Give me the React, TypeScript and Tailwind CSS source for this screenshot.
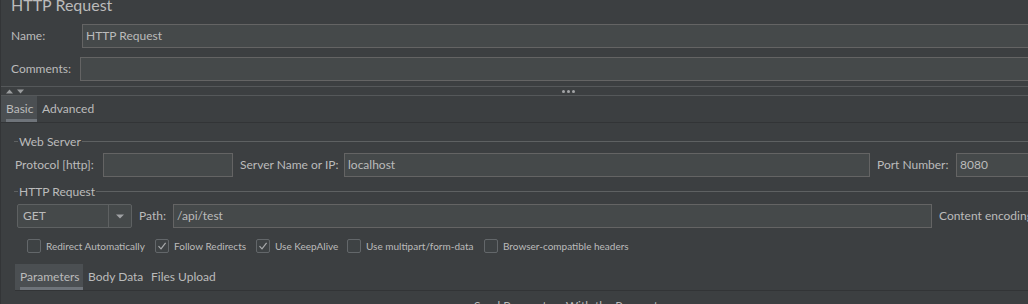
import React from "react";

const Field = ({
  className = "",
  value = "",
}: {
  className?: string;
  value?: string;
}) => (
  <div
    className={`h-[24px] shrink-0 border border-[#646464] bg-[#45494a] pl-[3px] text-[12px] leading-[22px] text-[#bbbbbb] whitespace-nowrap overflow-hidden ${className}`}
  >
    {value}
  </div>
);

const GroupTitle = ({ title }: { title: string }) => (
  <div className="flex h-[19px] items-center pl-[13px]">
    <div className="h-px w-[4px] bg-[#5e6162]" />
    <span className="px-[1px] text-[12px] leading-[19px]">{title}</span>
    <div className="h-px flex-1 bg-[#5e6162]" />
  </div>
);

const Checkbox = ({
  label,
  checked,
  width,
}: {
  label: string;
  checked?: boolean;
  width: string;
}) => (
  <div className={`flex shrink-0 items-center gap-[5px] ${width}`}>
    <div className="flex h-[14px] w-[14px] shrink-0 items-center justify-center rounded-[2px] border border-[#63676a] bg-[#3e4244]">
      {checked && (
        <svg width="10" height="10" viewBox="0 0 10 10">
          <path
            d="M1.5 5.2 L4 7.8 L8.6 1.8"
            fill="none"
            stroke="#a9abad"
            strokeWidth="1.2"
          />
        </svg>
      )}
    </div>
    <span className="whitespace-nowrap text-[10px] leading-[14px]">
      {label}
    </span>
  </div>
);

const Tab = ({
  label,
  active,
  className = "",
}: {
  label: string;
  active?: boolean;
  className?: string;
}) => (
  <div
    className={`flex h-full flex-col ${
      active ? "bg-[#4b4f52]" : ""
    } ${className}`}
  >
    <div className="flex flex-1 items-center pt-[3px] text-[12px] leading-[16px]">
      {label}
    </div>
    <div className={`h-[3px] ${active ? "bg-[#6f747a]" : ""}`} />
  </div>
);

export default function App() {
  return (
    <div className="h-[304px] w-[1028px] overflow-hidden border-l border-[#333537] bg-[#3c3f41] font-['Lato',sans-serif] text-[#bbbbbb]">
      {/* title */}
      <div className="h-[24px] overflow-hidden pl-[10px]">
        <div className="-mt-[5px] text-[16px] leading-[20px]">HTTP Request</div>
      </div>

      {/* name / comments */}
      <div className="flex h-[24px] items-center">
        <span className="w-[81px] shrink-0 pl-[10px] text-[12px]">Name:</span>
        <Field className="w-[960px]" value="HTTP Request" />
      </div>
      <div className="mt-[9px] flex h-[24px] items-center">
        <span className="w-[79px] shrink-0 pl-[10px] text-[12px]">Comments:</span>
        <Field className="w-[960px]" />
      </div>

      {/* splitter */}
      <div className="mt-[5px] flex h-[10px] items-center border-y border-[#55585a]">
        <div className="flex w-[561px] items-center gap-[4px] pl-[5px]">
          <svg width="7" height="5" viewBox="0 0 7 5">
            <path d="M0 4.5 L3.5 0.5 L7 4.5 Z" fill="#9a9c9e" />
          </svg>
          <svg width="7" height="5" viewBox="0 0 7 5">
            <path d="M0 0.5 L3.5 4.5 L7 0.5 Z" fill="#9a9c9e" />
          </svg>
        </div>
        <div className="flex gap-[2px]">
          <div className="h-[3px] w-[3px] rounded-full bg-[#a3a5a7]" />
          <div className="h-[3px] w-[3px] rounded-full bg-[#a3a5a7]" />
          <div className="h-[3px] w-[3px] rounded-full bg-[#a3a5a7]" />
        </div>
      </div>

      {/* top tabs */}
      <div className="flex h-[27px] border-b border-[#323436]">
        <Tab label="Basic" active className="w-[36px] pl-[5px]" />
        <Tab label="Advanced" className="pl-[5px] pr-[5px]" />
      </div>

      {/* Web Server */}
      <div className="mt-[9px]">
        <GroupTitle title="Web Server" />
      </div>
      <div className="mt-[2px] flex h-[24px] items-center pl-[14px] text-[12px]">
        <span className="w-[88px] shrink-0 whitespace-nowrap">Protocol [http]:</span>
        <Field className="w-[130px]" />
        <span className="ml-[7px] w-[104px] shrink-0 whitespace-nowrap">
          Server Name or IP:
        </span>
        <Field className="w-[526px]" value="localhost" />
        <span className="ml-[7px] w-[79px] shrink-0 whitespace-nowrap">
          Port Number:
        </span>
        <Field className="w-[100px] pl-[2px]" value="8080" />
      </div>

      {/* HTTP Request */}
      <div className="mt-[5px]">
        <GroupTitle title="HTTP Request" />
      </div>
      <div className="mt-[3px] flex h-[24px] items-center pl-[16px] text-[12px]">
        <div className="flex h-[24px] w-[115px] shrink-0 rounded-[2px] border border-[#5e6162] bg-[#45494a]">
          <div className="flex-1 pl-[5px] leading-[22px]">GET</div>
          <div className="flex w-[23px] items-center justify-center border-l border-[#5e6162]">
            <svg width="8" height="5" viewBox="0 0 8 5">
              <path d="M0 0.5 L4 4.5 L8 0.5 Z" fill="#a0a2a4" />
            </svg>
          </div>
        </div>
        <span className="ml-[7px] w-[34px] shrink-0">Path:</span>
        <Field className="w-[759px]" value="/api/test" />
        <span className="ml-[7px] shrink-0 whitespace-nowrap">Content encoding:</span>
      </div>

      {/* checkboxes */}
      <div className="mt-[9px] flex h-[18px] items-center pl-[26px]">
        <Checkbox label="Redirect Automatically" width="w-[128px]" />
        <Checkbox label="Follow Redirects" checked width="w-[101px]" />
        <Checkbox label="Use KeepAlive" checked width="w-[91px]" />
        <Checkbox label="Use multipart/form-data" width="w-[137px]" />
        <Checkbox label="Browser-compatible headers" width="w-[160px]" />
      </div>

      {/* bottom tabs */}
      <div className="mt-[9px] ml-[14px] flex h-[27px] border-b border-[#323436]">
        <Tab label="Parameters" active className="w-[68px] pl-[5px]" />
        <Tab label="Body Data" className="w-[63px] pl-[5px]" />
        <Tab label="Files Upload" className="pl-[5px] pr-[5px]" />
      </div>
      <div className="mt-[7px] pl-[106px] text-center text-[12px] leading-[16px]">
        Send Parameters With the Request:
      </div>
    </div>
  );
}
